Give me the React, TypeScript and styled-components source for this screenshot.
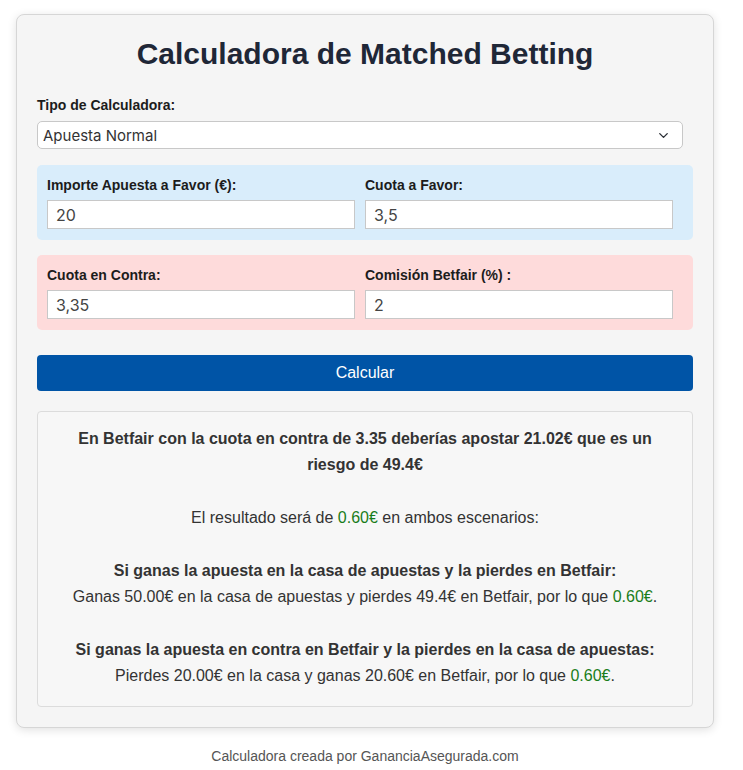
import React from 'react';
import styled, { createGlobalStyle } from 'styled-components';
import { ChevronDown } from 'lucide-react';

const GlobalStyle = createGlobalStyle`
  body {
    margin: 0;
    background: #ffffff;
    font-family: "Liberation Sans", Arial, Helvetica, sans-serif;
  }
`;

const Page = styled.div`
  width: 698px;
  padding: 14px 0 20px 16px;
`;

const Card = styled.div`
  background: #f5f5f5;
  border: 1px solid #d6d6d6;
  border-radius: 8px;
  box-shadow: 0 2px 10px rgba(0, 0, 0, 0.12);
  padding: 20px;
  display: flex;
  flex-direction: column;
`;

const Title = styled.h1`
  margin: 0 0 24px;
  font-size: 30px;
  line-height: 38px;
  font-weight: 700;
  text-align: center;
  color: #1f2737;
`;

const Label = styled.label`
  display: block;
  font-size: 14px;
  line-height: 16px;
  font-weight: 700;
  color: #1c1c1c;
`;

const TypeLabel = styled(Label)`
  margin-bottom: 8px;
`;

const SelectWrap = styled.div`
  position: relative;
  width: calc(100% - 10px);
  margin-bottom: 16px;

  svg {
    position: absolute;
    right: 12px;
    top: 7px;
    color: #2b2f36;
    pointer-events: none;
  }
`;

const Select = styled.select`
  appearance: none;
  width: 100%;
  height: 28px;
  box-sizing: border-box;
  padding: 0 5px;
  border: 1px solid #c8c8c8;
  border-radius: 5px;
  background: #ffffff;
  font-family: Inter, "Noto Sans", sans-serif;
  font-size: 15px;
  color: #333;
  outline: none;
`;

const Section = styled.div<{ tone: 'back' | 'lay' }>`
  display: grid;
  grid-template-columns: 1fr 1fr;
  padding: 10px 10px 11px;
  border-radius: 5px;
  background: ${p => (p.tone === 'back' ? '#d9edfb' : '#fedbdb')};
  margin-bottom: ${p => (p.tone === 'back' ? '15px' : '25px')};
`;

const Field = styled.div`
  display: flex;
  flex-direction: column;

  ${Label} {
    line-height: 20px;
    margin-bottom: 5px;
  }
`;

const Input = styled.input`
  width: calc(100% - 10px);
  height: 29px;
  box-sizing: border-box;
  padding: 0 8px;
  border: 1px solid #c8c8c8;
  background: #ffffff;
  font-family: Inter, "Noto Sans", sans-serif;
  font-size: 16px;
  color: #444;
  outline: none;
`;

const Button = styled.button`
  height: 36px;
  border: none;
  border-radius: 4px;
  background: #0054a6;
  color: #ffffff;
  font-family: "Liberation Sans", Arial, sans-serif;
  font-size: 16px;
  cursor: pointer;
  margin-bottom: 20px;
`;

const Result = styled.div`
  display: flex;
  flex-direction: column;
  gap: 27px;
  padding: 14px 15px 17px;
  border: 1px solid #dcdcdc;
  border-radius: 4px;
  background: #f7f7f7;
  text-align: center;
  color: #333;
  font-size: 16px;
  line-height: 26px;
`;

const Para = styled.p<{ strong?: boolean }>`
  margin: 0;
  font-weight: ${p => (p.strong ? 700 : 400)};
`;

const Profit = styled.span`
  color: #1a7d1a;
`;

const Footer = styled.div`
  margin-top: 19px;
  text-align: center;
  font-size: 14px;
  line-height: 18px;
  color: #555;
`;

const App: React.FC = () => {
  return (
    <>
      <GlobalStyle />
      <Page>
        <Card>
          <Title>Calculadora de Matched Betting</Title>

          <TypeLabel htmlFor="tipo">Tipo de Calculadora:</TypeLabel>
          <SelectWrap>
            <Select id="tipo" defaultValue="normal">
              <option value="normal">Apuesta Normal</option>
              <option value="free">Apuesta Gratis</option>
            </Select>
            <ChevronDown size={15} strokeWidth={2.2} />
          </SelectWrap>

          <Section tone="back">
            <Field>
              <Label>Importe Apuesta a Favor (€):</Label>
              <Input defaultValue="20" />
            </Field>
            <Field>
              <Label>Cuota a Favor:</Label>
              <Input defaultValue="3,5" />
            </Field>
          </Section>

          <Section tone="lay">
            <Field>
              <Label>Cuota en Contra:</Label>
              <Input defaultValue="3,35" />
            </Field>
            <Field>
              <Label>Comisión Betfair (%) :</Label>
              <Input defaultValue="2" />
            </Field>
          </Section>

          <Button>Calcular</Button>

          <Result>
            <Para strong>
              En Betfair con la cuota en contra de 3.35 deberías apostar 21.02€ que es un riesgo de 49.4€
            </Para>
            <Para>
              El resultado será de <Profit>0.60€</Profit> en ambos escenarios:
            </Para>
            <Para>
              <b>Si ganas la apuesta en la casa de apuestas y la pierdes en Betfair:</b>
              <br />
              Ganas 50.00€ en la casa de apuestas y pierdes 49.4€ en Betfair, por lo que <Profit>0.60€</Profit>.
            </Para>
            <Para>
              <b>Si ganas la apuesta en contra en Betfair y la pierdes en la casa de apuestas:</b>
              <br />
              Pierdes 20.00€ en la casa y ganas 20.60€ en Betfair, por lo que <Profit>0.60€</Profit>.
            </Para>
          </Result>
        </Card>
        <Footer>Calculadora creada por GananciaAsegurada.com</Footer>
      </Page>
    </>
  );
};

export default App;
